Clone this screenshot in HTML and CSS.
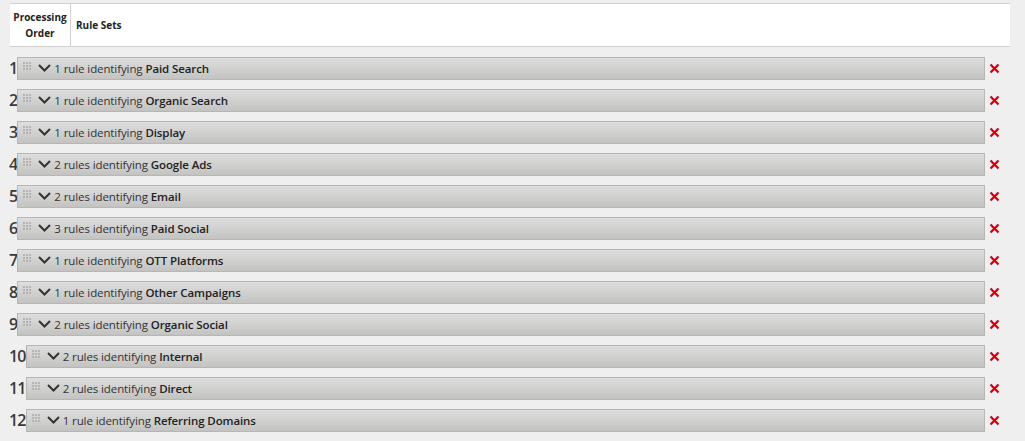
FILE: index.html
```html
<!DOCTYPE html>
<html lang="en">
<head>
    <meta charset="UTF-8">
    <title>Processing Rules</title>
    <link rel="stylesheet" href="styles.css">
</head>
<body>
    <div class="tabla">
        <div class="cabecera">
            <div class="col-orden">Processing<br>Order</div>
            <div class="col-reglas">Rule Sets</div>
        </div>

        <div class="lista" id="lista"></div>
    </div>

    <script>
const reglas = [
    [1, "Paid Search"],
    [1, "Organic Search"],
    [1, "Display"],
    [2, "Google Ads"],
    [2, "Email"],
    [3, "Paid Social"],
    [1, "OTT Platforms"],
    [1, "Other Campaigns"],
    [2, "Organic Social"],
    [2, "Internal"],
    [2, "Direct"],
    [1, "Referring Domains"]
];

const lista = document.getElementById("lista");

reglas.forEach(function (r, i) {
    const fila = document.createElement("div");
    fila.className = "fila";
    const texto = r[0] + (r[0] === 1 ? " rule" : " rules") + " identifying ";
    fila.innerHTML =
        '<span class="numero">' + (i + 1) + '</span>' +
        '<div class="barra">' +
            '<span class="asa"><i></i><i></i><i></i><i></i><i></i><i></i><i></i><i></i><i></i></span>' +
            '<svg class="flecha" width="13" height="8" viewBox="0 0 13 8"><path d="M1 1 L6.5 6.5 L12 1" fill="none" stroke="#333" stroke-width="2"/></svg>' +
            '<span class="titulo">' + texto + '<b>' + r[1] + '</b></span>' +
        '</div>' +
        '<svg class="quitar" width="11" height="11" viewBox="0 0 11 11"><path d="M1.5 1.5 L9.5 9.5 M9.5 1.5 L1.5 9.5" stroke="#d8000c" stroke-width="2.3"/></svg>';
    lista.appendChild(fila);
});
    </script>
</body>
</html>
```

FILE: styles.css
```css
body {
    font-family: "Open Sans", Arial, sans-serif;
    margin: 0;
    padding: 3px 15px 0 9px;
    background-color: #efefef;
    color: #333;
}

.cabecera {
    display: flex;
    background-color: #fff;
    border-top: 1px solid #d0d0d0;
    border-bottom: 1px solid #d0d0d0;
    height: 42px;
    margin-left: 1px;
    font-size: 10px;
    font-weight: bold;
    color: #222;
}

.col-orden {
    width: 60px;
    border-right: 1px solid #d0d0d0;
    text-align: center;
    display: flex;
    align-items: center;
    justify-content: center;
    line-height: 16px;
}

.col-reglas {
    display: flex;
    align-items: center;
    padding-left: 5px;
}

.lista {
    padding: 5px 10px 0 0;
}

.fila {
    display: flex;
    align-items: center;
    height: 32px;
}

.numero {
    font-size: 16px;
    font-weight: 600;
    color: #3a3a3a;
    letter-spacing: -0.8px;
}

.barra {
    flex: 1;
    display: flex;
    align-items: center;
    height: 21px;
    background: linear-gradient(#dedede, #c3c3c2);
    border: 1px solid #b6b6b4;
    font-size: 11.5px;
    color: #333;
}

.asa {
    display: grid;
    grid-template-columns: repeat(3, 2px);
    gap: 1px;
    margin: 0 7px 5px 5px;
}

.asa i {
    width: 2px;
    height: 2px;
    background-color: #b4b4b4;
}

.flecha {
    margin-right: 3px;
}

.titulo {
    letter-spacing: -0.1px;
}

.titulo b {
    font-weight: 600;
    color: #222;
}

.quitar {
    margin: 0 0 0 4px;
}
```
